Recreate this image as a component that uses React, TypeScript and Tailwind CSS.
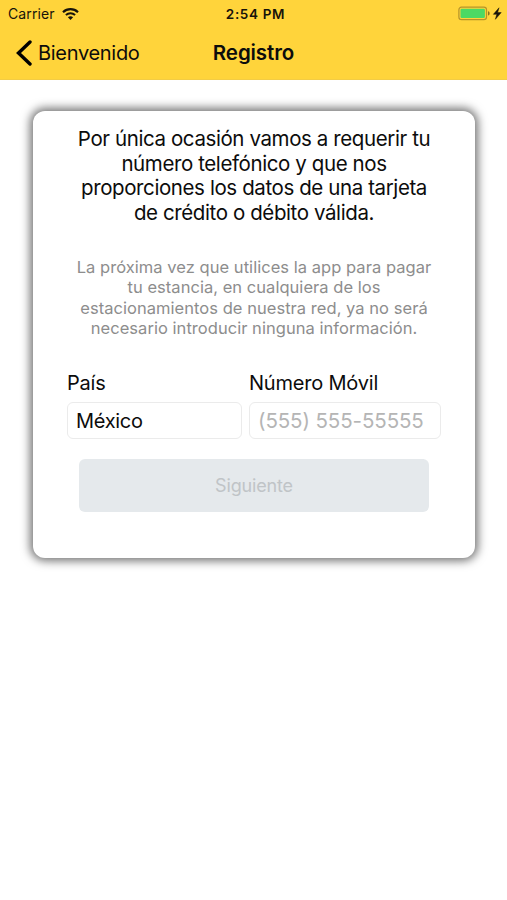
interface FieldProps {
  label: string;
  className: string;
  children: React.ReactNode;
}

const Field: React.FC<FieldProps> = ({ label, className, children }) => {
  return (
    <label className={className}>
      <span className="block h-[38px] text-[20px] leading-[38px] tracking-[-0.2px] whitespace-nowrap">
        {label}
      </span>
      {children}
    </label>
  );
};

const WifiIcon = () => (
  <svg className="ml-[7px] h-3 w-[17px]" viewBox="0 0 17 12" fill="none">
    <path d="M1 4.2C5.2.2 11.8.2 16 4.2" stroke="#17130a" strokeWidth="2.2" />
    <path d="M3.9 7.1c2.6-2.4 6.6-2.4 9.2 0" stroke="#17130a" strokeWidth="2" />
    <path d="M8.5 12 5.9 9.3c1.5-1.3 3.7-1.3 5.2 0z" fill="#17130a" />
  </svg>
);

const BatteryIcon = () => (
  <svg className="h-[15px] w-[45px]" viewBox="0 0 45 15" fill="none">
    <rect x="0.9" y="1.2" width="27.6" height="12.4" rx="2.6" stroke="#b5942a" strokeWidth="1.2" />
    <rect x="2.5" y="2.8" width="24.4" height="9.2" rx="1.2" fill="#4cd964" />
    <path d="M30 5.2c2.2.6 2.2 3.8 0 4.4z" fill="#8b7120" />
    <path
      d="M41 1.8 35.4 8.3h3.4l-1.4 5 5.8-6.7h-3.6z"
      fill="#17130a"
      stroke="#17130a"
      strokeWidth="0.5"
    />
  </svg>
);

const StatusBar = () => (
  <div className="grid h-[27px] grid-cols-[1fr_auto_1fr] items-center pr-1 pl-2 text-[#17130a]">
    <div className="flex items-center">
      <span className="text-[14px] tracking-[0.1px]">Carrier</span>
      <WifiIcon />
    </div>
    <span className="pt-[2px] text-[13.5px] leading-none font-semibold tracking-[0.65px]">
      2:54 PM
    </span>
    <div className="flex justify-end">
      <BatteryIcon />
    </div>
  </div>
);

const NavBar = () => (
  <div className="grid h-[52px] grid-cols-[1fr_auto_1fr] items-center px-4">
    <button className="flex items-center gap-[6px] text-[20px] tracking-[-0.3px]">
      <svg className="h-7 w-4" viewBox="0 0 16 28" fill="none">
        <path d="M14 3 2.5 14 14 25" stroke="#000" strokeWidth="3.4" strokeLinecap="round" />
      </svg>
      Bienvenido
    </button>
    <h1 className="text-[20.5px] font-semibold tracking-[-0.1px]">Registro</h1>
  </div>
);

export default function App() {
  return (
    <div className="h-[900px] w-[507px] overflow-hidden bg-white font-[Inter,'Liberation_Sans',sans-serif] text-[#0c0c0c]">
      <header className="h-[79.5px] border-b border-[#f3cc45] bg-[#ffd43b]">
        <StatusBar />
        <NavBar />
      </header>

      <main className="mt-[31.5px] ml-[33px] h-[447px] w-[442px] rounded-[12px] bg-white pt-[16px] shadow-[0_0_10px_3px_rgba(0,0,0,0.55)]">
        <p className="text-center text-[20.5px] leading-[24.7px] tracking-[-0.4px]">
          Por única ocasión vamos a requerir tu
          <br />
          número telefónico y que nos
          <br />
          proporciones los datos de una tarjeta
          <br />
          de crédito o débito válida.
        </p>
        <p className="mt-[31px] text-center text-[16.5px] leading-[20.4px] tracking-[0.04px] text-[#8d8d8d]">
          La próxima vez que utilices la app para pagar
          <br />
          tu estancia, en cualquiera de los
          <br />
          estacionamientos de nuestra red, ya no será
          <br />
          necesario introducir ninguna información.
        </p>

        <div className="mt-[26px] flex gap-[7px] pl-[34px]">
          <Field label="País" className="w-[175px]">
            <input
              className="block h-[37px] w-full rounded-[6px] border border-[#ebebeb] px-2 text-[20px] tracking-[-0.3px] outline-none"
              defaultValue="México"
            />
          </Field>
          <Field label="Número Móvil" className="w-[192px]">
            <input
              className="block h-[37px] w-full rounded-[6px] border border-[#ebebeb] px-2 text-[20.5px] tracking-[-0.1px] outline-none placeholder:text-[#b5b5b5]"
              placeholder="(555) 555-55555"
            />
          </Field>
        </div>

        <button
          className="mt-5 ml-[46px] block h-[53px] w-[350px] rounded-[6px] bg-[#e5e9ec] text-[18px] tracking-[-0.15px] text-[#c0c4c7]"
          disabled
        >
          Siguiente
        </button>
      </main>
    </div>
  );
}
